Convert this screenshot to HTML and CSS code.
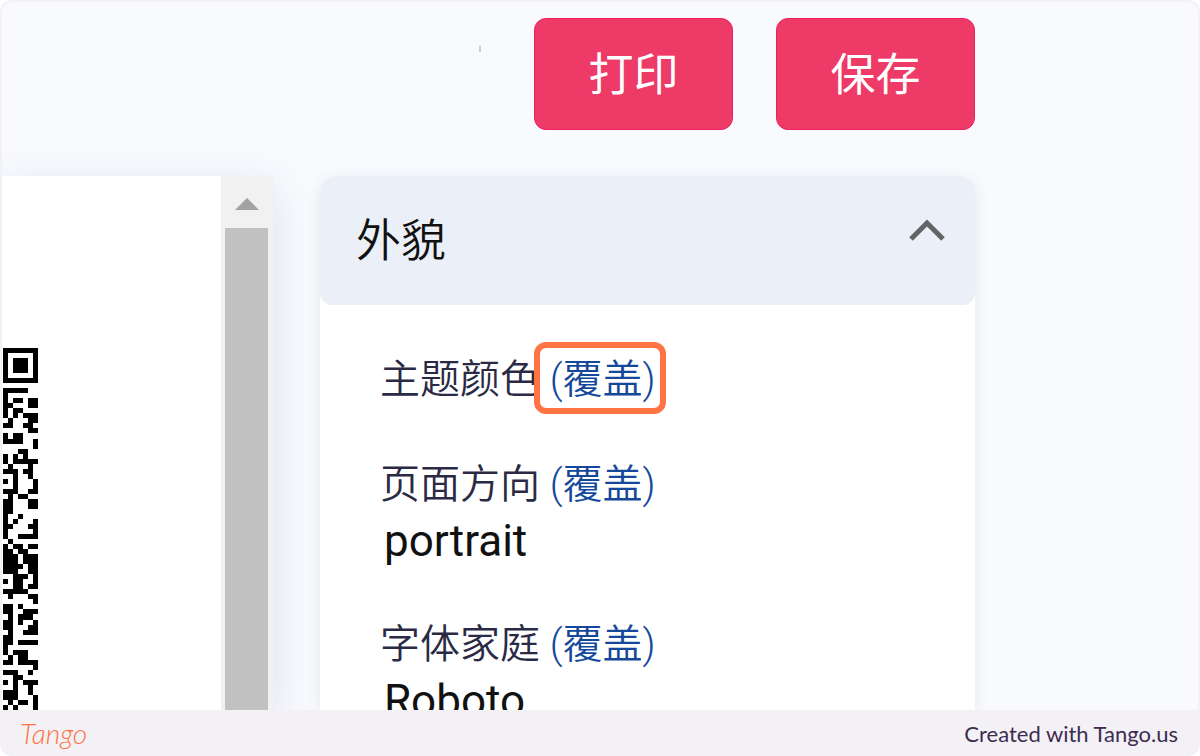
FILE: index.html
```html
<!DOCTYPE html>
<html lang="zh-CN">
<head>
    <meta charset="UTF-8">
    <meta name="viewport" content="width=device-width, initial-scale=1.0">
    <title>外貌</title>
    <link rel="stylesheet" href="styles.css">
</head>
<body>

    <div class="frame">
        <main class="screen">
            <div class="toolbar">
                <span class="tick"></span>
                <button type="button" class="btn">打印</button>
                <button type="button" class="btn">保存</button>
            </div>

            <div class="content">
                <section class="preview">
                    <div class="page">
                        <svg class="qr" id="qr" viewBox="0 0 7 72" preserveAspectRatio="none" shape-rendering="crispEdges"></svg>
                    </div>
                    <div class="scrollbar">
                        <svg class="arrow" viewBox="0 0 24 12"><path d="M0 12 L12 0 L24 12 Z"/></svg>
                        <div class="thumb"></div>
                    </div>
                </section>

                <section class="panel">
                    <button type="button" class="panel-header">
                        <span>外貌</span>
                        <svg class="chevron" viewBox="0 0 36 22"><path d="M2 20 L18 4 L34 20"/></svg>
                    </button>
                    <dl class="settings">
                        <div class="setting">
                            <dt>主题颜色 <a href="#" class="override highlighted">(覆盖)</a></dt>
                        </div>
                        <div class="setting">
                            <dt>页面方向 <a href="#" class="override">(覆盖)</a></dt>
                            <dd>portrait</dd>
                        </div>
                        <div class="setting">
                            <dt>字体家庭 <a href="#" class="override">(覆盖)</a></dt>
                            <dd>Roboto</dd>
                        </div>
                    </dl>
                </section>
            </div>
        </main>

        <footer class="footer">
            <span class="logo">Tango</span>
            <span class="credit">Created with Tango.us</span>
        </footer>
    </div>

    <script>
        // Visible right edge of the QR code, one string per row
        const rows = [
            "1111111", "1000001", "1011101", "1011101", "1011101", "1000001", "1111111", "0000000",
            "1111100", "1000000", "1011011", "1100011", "1011000", "1010111", "0100011", "1100110",
            "0000011", "1011000", "1111001", "0000001", "0001100", "1010100", "1011111", "0100010",
            "1110110", "0010010", "1010001", "0010001", "1110011", "0101100", "1100011", "1100011",
            "1100000", "1001000", "1010001", "1100011", "1000001", "1001111", "0100000", "1011011",
            "1101100", "1110111", "1110111", "1111011", "1110011", "0011101", "1011001", "0011011",
            "1111100", "0100011", "0000001", "1101000", "1100111", "0101110", "1101001", "1100011",
            "0100111", "1100000", "1101111", "1000000", "1011100", "0101100", "1101111", "0000001",
            "1110010", "0011000", "1010111", "0010010", "1110010", "1110001", "0101101", "1010001"
        ];

        let path = "";
        rows.forEach(function (row, y) {
            for (let x = 0; x < row.length; x++) {
                if (row[x] === "1") {
                    path += `M${x} ${y}h1v1h-1z`;
                }
            }
        });
        document.getElementById("qr").innerHTML = `<path d="${path}"/>`;
    </script>

</body>
</html>
```
FILE: styles.css
```css
* {
    box-sizing: border-box;
}

body {
    margin: 0;
    background-color: #ffffff;
    font-family: Roboto, "Noto Sans CJK SC", sans-serif;
}

.frame {
    display: flex;
    flex-direction: column;
    height: 100vh;
    background-color: #f3f1f6;
    border-radius: 12px;
    overflow: hidden;
}

.screen {
    display: flex;
    flex-direction: column;
    flex: 1;
    min-height: 0;
    margin: 2px 2px 0;
    padding-top: 16px;
    padding-right: 223px;
    background-color: #f8fafe;
    border-radius: 10px 10px 0 0;
    overflow: hidden;
}

.toolbar {
    display: flex;
    justify-content: flex-end;
    gap: 43px;
    margin-bottom: 46px;
}

.tick {
    width: 2px;
    height: 6px;
    margin-top: 28px;
    margin-right: 10px;
    background-color: #c3d0e2;
}

.btn {
    width: 199px;
    height: 112px;
    padding: 0 0 6px;
    border: 1px solid #ee1f5c;
    border-radius: 12px;
    background-color: #ee3a66;
    color: #ffffff;
    font-family: inherit;
    font-size: 45px;
    cursor: pointer;
}

.content {
    display: flex;
    flex: 1;
    gap: 47px;
    min-height: 0;
}

.preview {
    display: flex;
    flex: 0 0 271px;
    box-shadow: 0 12px 40px rgba(60, 70, 100, 0.14);
}

.page {
    flex: 1;
    padding-top: 172px;
    padding-left: 1px;
    background-color: #ffffff;
    overflow: hidden;
}

.qr {
    display: block;
    width: 35px;
    height: 362px;
}

.scrollbar {
    display: flex;
    flex-direction: column;
    align-items: center;
    width: 52px;
    padding: 22px 5px 0 4px;
    background-color: #f1f1f1;
}

.arrow {
    flex: none;
    width: 24px;
    height: 12px;
    margin-bottom: 18px;
    fill: #a2a2a2;
}

.thumb {
    flex: 1;
    width: 100%;
    background-color: #c1c1c1;
}

.panel {
    flex: 1;
    border-radius: 16px 16px 0 0;
    background-color: #ffffff;
    box-shadow: 0 4px 16px rgba(60, 70, 100, 0.1);
}

.panel-header {
    display: flex;
    align-items: center;
    justify-content: space-between;
    width: 100%;
    height: 129px;
    padding: 0 30px 6px 36px;
    border: none;
    border-radius: 16px 16px 12px 12px;
    background-color: #ebeff7;
    color: #111111;
    font-family: inherit;
    font-size: 45px;
    font-weight: 350;
    cursor: pointer;
}

.chevron {
    width: 36px;
    height: 22px;
    margin-bottom: 16px;
    fill: none;
    stroke: #636467;
    stroke-width: 5;
}

.settings {
    display: flex;
    flex-direction: column;
    gap: 47px;
    margin: 0;
    padding: 46px 60px 0;
}

.setting dt {
    color: #2a2a44;
    font-size: 40px;
    font-weight: 350;
    line-height: 58px;
    white-space: nowrap;
}

.setting dd {
    margin: 0;
    padding-left: 4px;
    color: #111111;
    font-size: 44px;
    line-height: 55px;
}

.override {
    position: relative;
    color: #14489a;
    text-decoration: none;
}

/* Ring around the link to click */
.highlighted::after {
    content: "";
    position: absolute;
    inset: -14px -10px -11px -16px;
    border: 6px solid #ff7442;
    border-radius: 12px;
}

.footer {
    display: flex;
    align-items: center;
    justify-content: space-between;
    height: 46px;
    padding: 0 22px 0 20px;
    font-family: Lato, sans-serif;
}

.logo {
    color: #ff7442;
    font-size: 28px;
    font-style: italic;
    font-weight: 300;
}

.credit {
    color: #3e2c50;
    font-size: 22px;
}
```
